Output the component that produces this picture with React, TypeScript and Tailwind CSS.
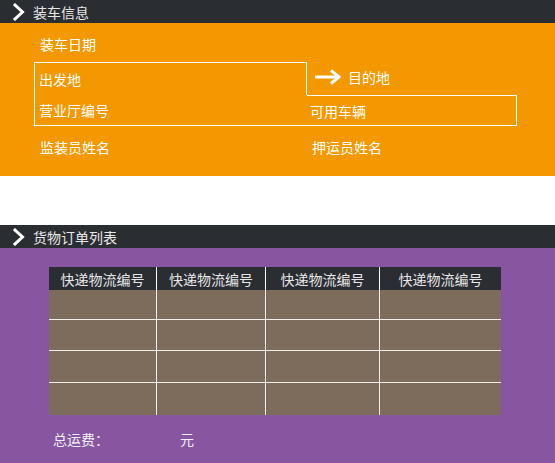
import React from "react";

const FONT = { fontFamily: '"Noto Sans CJK SC", "Noto Sans", sans-serif' };

// Section title bar with chevron
const SectionBar: React.FC<{ title: string }> = ({ title }) => (
  <div className="h-[23px] bg-[#2a2d31] flex items-center pl-[13px] text-[14px] text-[#e8e8e8]">
    <svg width="12" height="18" viewBox="0 0 12 18" className="shrink-0">
      <path d="M2 2 L9.5 9 L2 16" fill="none" stroke="#ffffff" strokeWidth="3" strokeLinecap="square" />
    </svg>
    <span className="ml-[8px] leading-[20px]">{title}</span>
  </div>
);

const Arrow = () => (
  <svg width="28" height="16" viewBox="0 0 28 16" className="shrink-0">
    <path d="M1 8 H24" stroke="#ffffff" strokeWidth="3" />
    <path d="M17 1.5 L25 8 L17 14.5" fill="none" stroke="#ffffff" strokeWidth="3" />
  </svg>
);

const columns = ["快递物流编号", "快递物流编号", "快递物流编号", "快递物流编号"];
const colWidths = ["w-[108px]", "w-[109px]", "w-[114px]", "flex-1"];
const rowHeights = ["h-[30px]", "h-[31px]", "h-[32px]", "h-[32px]"];

export default function App() {
  return (
    <div className="w-[555px] h-[463px] bg-white overflow-hidden text-white" style={FONT}>
      <SectionBar title="装车信息" />

      {/* Loading info */}
      <div className="h-[153px] bg-[#f39800] pt-[11px] text-[14px] leading-[20px]">
        <div className="pl-[40px]">装车日期</div>

        <div className="ml-[34px] mt-[8px]">
          <div className="flex">
            <div className="w-[273px] h-[33px] border-t border-l border-r border-white flex items-center pl-[4px]">
              出发地
            </div>
            <div className="flex items-center pl-[7px] pb-[3px] gap-[6px]">
              <Arrow />
              <span>目的地</span>
            </div>
          </div>
          <div className="flex w-[483px] h-[31px] border-l border-r border-b border-white">
            <div className="w-[272px] flex items-center pl-[4px]">营业厅编号</div>
            <div className="flex-1 border-t border-white flex items-center pl-[3px] pt-[1px]">可用车辆</div>
          </div>
        </div>

        <div className="flex mt-[11px]">
          <div className="w-[312px] pl-[40px]">监装员姓名</div>
          <div>押运员姓名</div>
        </div>
      </div>

      <div className="h-[49px] bg-white" />

      <SectionBar title="货物订单列表" />

      {/* Order list */}
      <div className="h-[215px] bg-[#8856a0] pt-[19px]">
        <div className="ml-[49px] w-[452px]">
          <div className="flex h-[23px] bg-[#2a2d31] text-[14px] text-[#e6e6e6]">
            {columns.map((c, i) => (
              <div
                key={i}
                className={`${colWidths[i]} ${i < 3 ? "border-r border-white" : ""} flex items-center justify-center leading-[20px]`}
              >
                {c}
              </div>
            ))}
          </div>
          <div className="bg-[#7d6b5c]">
            {rowHeights.map((h, r) => (
              <div key={r} className={`flex ${h} ${r < 3 ? "border-b border-white/90" : ""}`}>
                {colWidths.map((w, i) => (
                  <div key={i} className={`${w} ${i < 3 ? "border-r border-white/90" : ""}`} />
                ))}
              </div>
            ))}
          </div>
        </div>

        <div className="flex mt-[14px] text-[14px] leading-[20px] text-[#f0f0f0]">
          <div className="w-[180px] pl-[53px]">总运费：</div>
          <div>元</div>
        </div>
      </div>
    </div>
  );
}
